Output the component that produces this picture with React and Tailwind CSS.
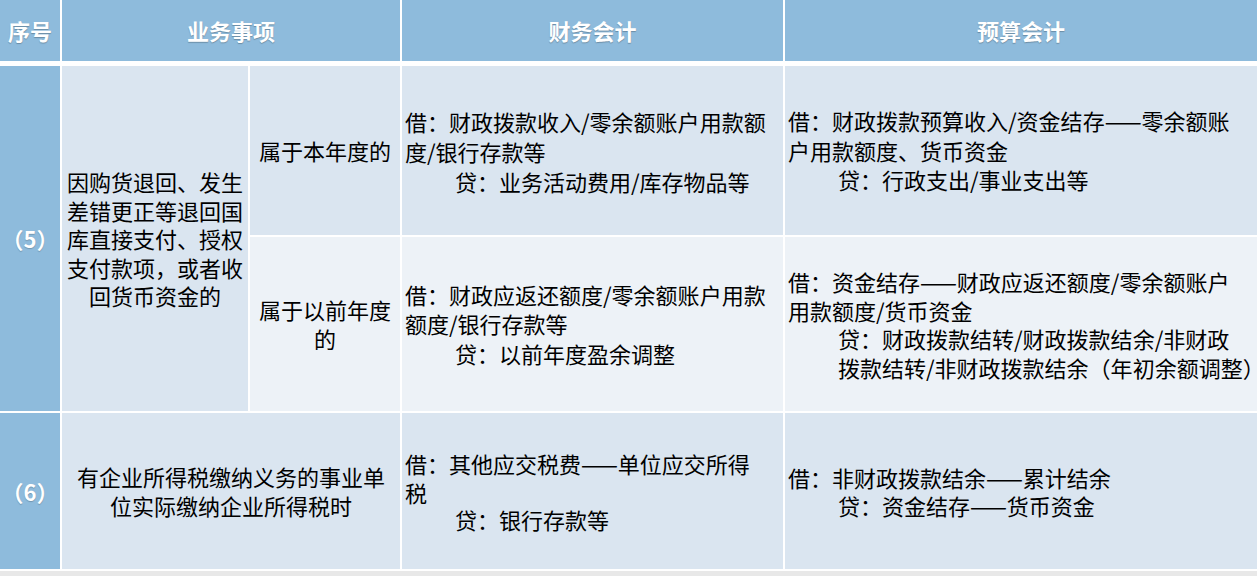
import React from "react";

const Lines = ({ lines, className = "" }) => (
  <div className={className}>
    {lines.map((l, i) => (
      <div key={i} className={"whitespace-nowrap " + (l.indent ? "pl-[50px]" : "")}>
        {l.t}
      </div>
    ))}
  </div>
);

export default function App() {
  const hdr =
    "bg-[#8ebbdc] flex items-center justify-center text-white font-bold text-[22px] [text-shadow:0_1px_1px_rgba(0,0,0,0.25)]";
  const num =
    "bg-[#8ebbdc] flex items-center justify-center text-white font-bold text-[22px] [text-shadow:0_1px_1px_rgba(0,0,0,0.2)]";
  const dark = "bg-[#dae5f0]";
  const light = "bg-[#edf2f7]";
  const cellL = "flex items-center pl-[3px] text-[22px] text-black overflow-hidden";

  return (
    <div className="w-[1257px] h-[576px] bg-white overflow-hidden font-['Noto_Sans_CJK_SC',sans-serif]">
      <div className="grid grid-cols-[60px_186px_150px_381px_472px] gap-x-[2px] h-[61px]">
        <div className={hdr}>序号</div>
        <div className={hdr + " col-span-2"}>业务事项</div>
        <div className={hdr}>财务会计</div>
        <div className={hdr}>预算会计</div>
      </div>

      <div className="mt-[5px] grid grid-cols-[60px_186px_150px_381px_472px] grid-rows-[169px_174px_156px] gap-[2px]">
        <div className={num + " row-span-2"}>（5）</div>
        <div
          className={
            dark +
            " row-span-2 flex items-center justify-center text-center text-[22px] leading-[28.5px] text-black px-[3px]"
          }
        >
          <div>
            <div className="whitespace-nowrap">因购货退回、发生</div>
            <div className="whitespace-nowrap">差错更正等退回国</div>
            <div className="whitespace-nowrap">库直接支付、授权</div>
            <div className="whitespace-nowrap">支付款项，或者收</div>
            <div className="whitespace-nowrap">回货币资金的</div>
          </div>
        </div>
        <div className={dark + " flex items-center justify-center text-center text-[22px] text-black"}>
          属于本年度的
        </div>
        <div className={dark + " " + cellL}>
          <Lines
            className="leading-[30px]"
            lines={[
              { t: "借：财政拨款收入/零余额账户用款额" },
              { t: "度/银行存款等" },
              { t: "贷：业务活动费用/库存物品等", indent: true },
            ]}
          />
        </div>
        <div className={dark + " " + cellL}>
          <Lines
            className="leading-[29.5px]"
            lines={[
              { t: "借：财政拨款预算收入/资金结存——零余额账" },
              { t: "户用款额度、货币资金" },
              { t: "贷：行政支出/事业支出等", indent: true },
            ]}
          />
        </div>

        <div
          className={
            light + " flex items-center justify-center text-center text-[22px] leading-[29px] text-black"
          }
        >
          <div>
            <div>属于以前年度</div>
            <div>的</div>
          </div>
        </div>
        <div className={light + " " + cellL}>
          <Lines
            className="leading-[29.5px]"
            lines={[
              { t: "借：财政应返还额度/零余额账户用款" },
              { t: "额度/银行存款等" },
              { t: "贷：以前年度盈余调整", indent: true },
            ]}
          />
        </div>
        <div className={light + " " + cellL}>
          <Lines
            className="leading-[28.5px]"
            lines={[
              { t: "借：资金结存——财政应返还额度/零余额账户" },
              { t: "用款额度/货币资金" },
              { t: "贷：财政拨款结转/财政拨款结余/非财政", indent: true },
              { t: "拨款结转/非财政拨款结余（年初余额调整）", indent: true },
            ]}
          />
        </div>

        <div className={num}>（6）</div>
        <div
          className={
            dark +
            " col-span-2 flex items-center justify-center text-center text-[22px] leading-[29px] text-black"
          }
        >
          <div>
            <div className="whitespace-nowrap">有企业所得税缴纳义务的事业单</div>
            <div className="whitespace-nowrap">位实际缴纳企业所得税时</div>
          </div>
        </div>
        <div className={dark + " " + cellL}>
          <div className="text-[22px] leading-[29px]">
            <div className="whitespace-nowrap">借：其他应交税费——单位应交所得</div>
            <div className="whitespace-nowrap">税</div>
            <div className="whitespace-nowrap pl-[50px] mt-[-2px]">贷：银行存款等</div>
          </div>
        </div>
        <div className={dark + " " + cellL}>
          <Lines
            className="leading-[28.5px]"
            lines={[
              { t: "借：非财政拨款结余——累计结余" },
              { t: "贷：资金结存——货币资金", indent: true },
            ]}
          />
        </div>
      </div>
      <div className="mt-[2px] h-[5px] bg-[#e8e8e8]" />
    </div>
  );
}
